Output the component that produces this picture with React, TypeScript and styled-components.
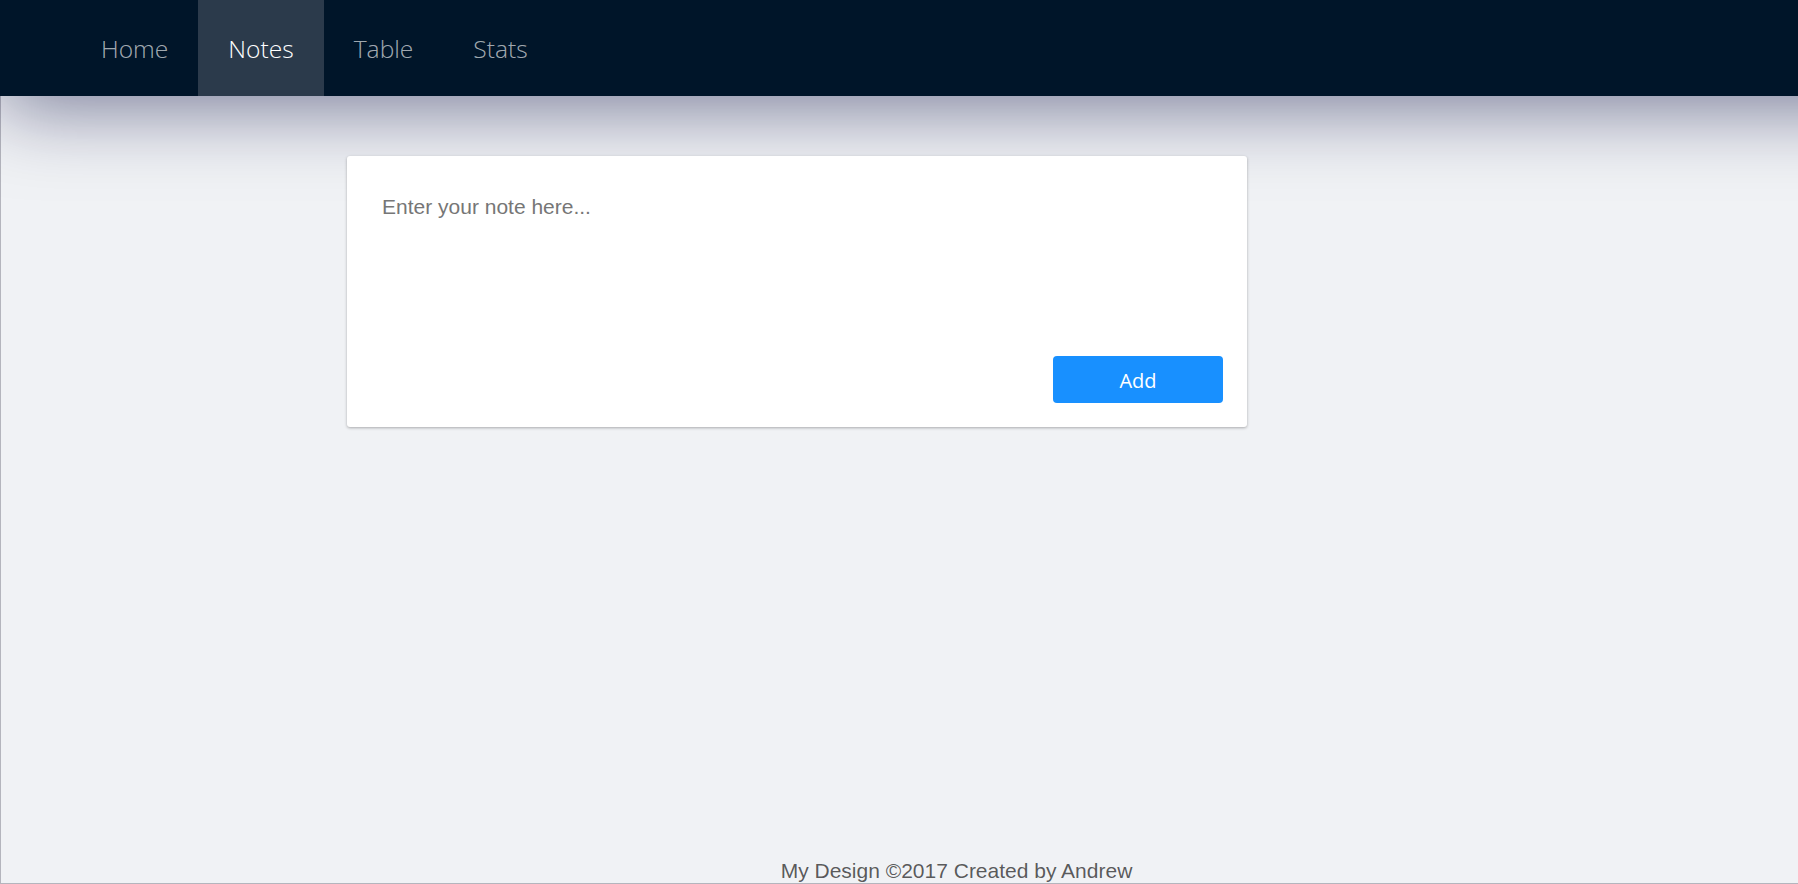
import styled, { createGlobalStyle } from "styled-components";

const palette = {
  header: "#001529",
  headerActive: "#2b3a4b",
  navText: "rgba(255, 255, 255, 0.65)",
  navActive: "#ffffff",
  page: "#f0f2f5",
  frame: "#b4b5bd",
  card: "#ffffff",
  placeholder: "#767676",
  primary: "#1890ff",
  footerText: "rgba(0, 0, 0, 0.65)",
};

const GlobalStyle = createGlobalStyle`
  html, body {
    margin: 0;
    padding: 0;
    overflow: hidden;
    background: ${palette.page};
  }
  * {
    box-sizing: border-box;
  }
`;

const Layout = styled.div`
  height: 884px;
  display: flex;
  flex-direction: column;
  background: ${palette.page};
  border-bottom: 1px solid ${palette.frame};
  overflow: hidden;
`;

const Header = styled.header`
  position: relative;
  z-index: 1;
  flex: 0 0 96px;
  height: 96px;
  background: ${palette.header};
  padding-left: 71px;
  display: flex;

  /* the drop shadow runs past the right edge, as in the original page */
  &::after {
    content: "";
    position: absolute;
    top: 0;
    bottom: 0;
    left: 0;
    right: -200px;
    z-index: -1;
    box-shadow: 0 10px 80px rgba(0, 5, 60, 0.52);
  }
`;

const Nav = styled.nav`
  display: flex;
  height: 100%;
`;

const NavItem = styled.a<{ $active?: boolean }>`
  display: flex;
  align-items: center;
  padding: 0 30px;
  height: 100%;
  font-family: "Open Sans", "Noto Sans", sans-serif;
  font-weight: 300;
  font-size: 24.6px;
  text-decoration: none;
  cursor: pointer;
  color: ${(p) => (p.$active ? palette.navActive : palette.navText)};
  background: ${(p) => (p.$active ? palette.headerActive : "transparent")};
`;

const Body = styled.div`
  flex: 1;
  display: flex;
  flex-direction: column;
  border-left: 1px solid ${palette.frame};
`;

const Content = styled.main`
  flex: 0 0 735px;
  padding: 60px 0 0 346px;
`;

const Card = styled.section`
  position: relative;
  z-index: 2;
  width: 900px;
  background: ${palette.card};
  border-radius: 3px;
  box-shadow: 0 1px 3px rgba(0, 0, 0, 0.3);
  padding: 24px;
  display: flex;
  flex-direction: column;
`;

const NoteInput = styled.textarea`
  display: block;
  width: 100%;
  height: 160px;
  border: none;
  outline: none;
  resize: none;
  padding: 11px 11px 9px;
  font-family: "Liberation Sans", Arial, sans-serif;
  font-size: 21px;
  line-height: 1.5;
  color: #333;
  background: transparent;

  &::placeholder {
    color: ${palette.placeholder};
  }
`;

const Actions = styled.div`
  display: flex;
  justify-content: flex-end;
  margin-top: 16px;
`;

const AddButton = styled.button`
  width: 170px;
  height: 47px;
  border: none;
  border-radius: 4px;
  background: ${palette.primary};
  color: #fff;
  font-family: "Open Sans", "Noto Sans", sans-serif;
  font-size: 20px;
  padding-top: 2px;
  cursor: pointer;
`;

const Footer = styled.footer`
  padding: 24px 0 24px 114px;
  text-align: center;
  font-family: "Liberation Sans", Arial, sans-serif;
  font-size: 21px;
  line-height: 1.5;
  color: ${palette.footerText};
`;

export default function App() {
  return (
    <>
      <GlobalStyle />
      <Layout>
        <Header>
          <Nav>
            <NavItem>Home</NavItem>
            <NavItem $active>Notes</NavItem>
            <NavItem>Table</NavItem>
            <NavItem>Stats</NavItem>
          </Nav>
        </Header>
        <Body>
          <Content>
            <Card>
              <NoteInput placeholder="Enter your note here..." />
              <Actions>
                <AddButton type="button">Add</AddButton>
              </Actions>
            </Card>
          </Content>
          <Footer>My Design ©2017 Created by Andrew</Footer>
        </Body>
      </Layout>
    </>
  );
}
